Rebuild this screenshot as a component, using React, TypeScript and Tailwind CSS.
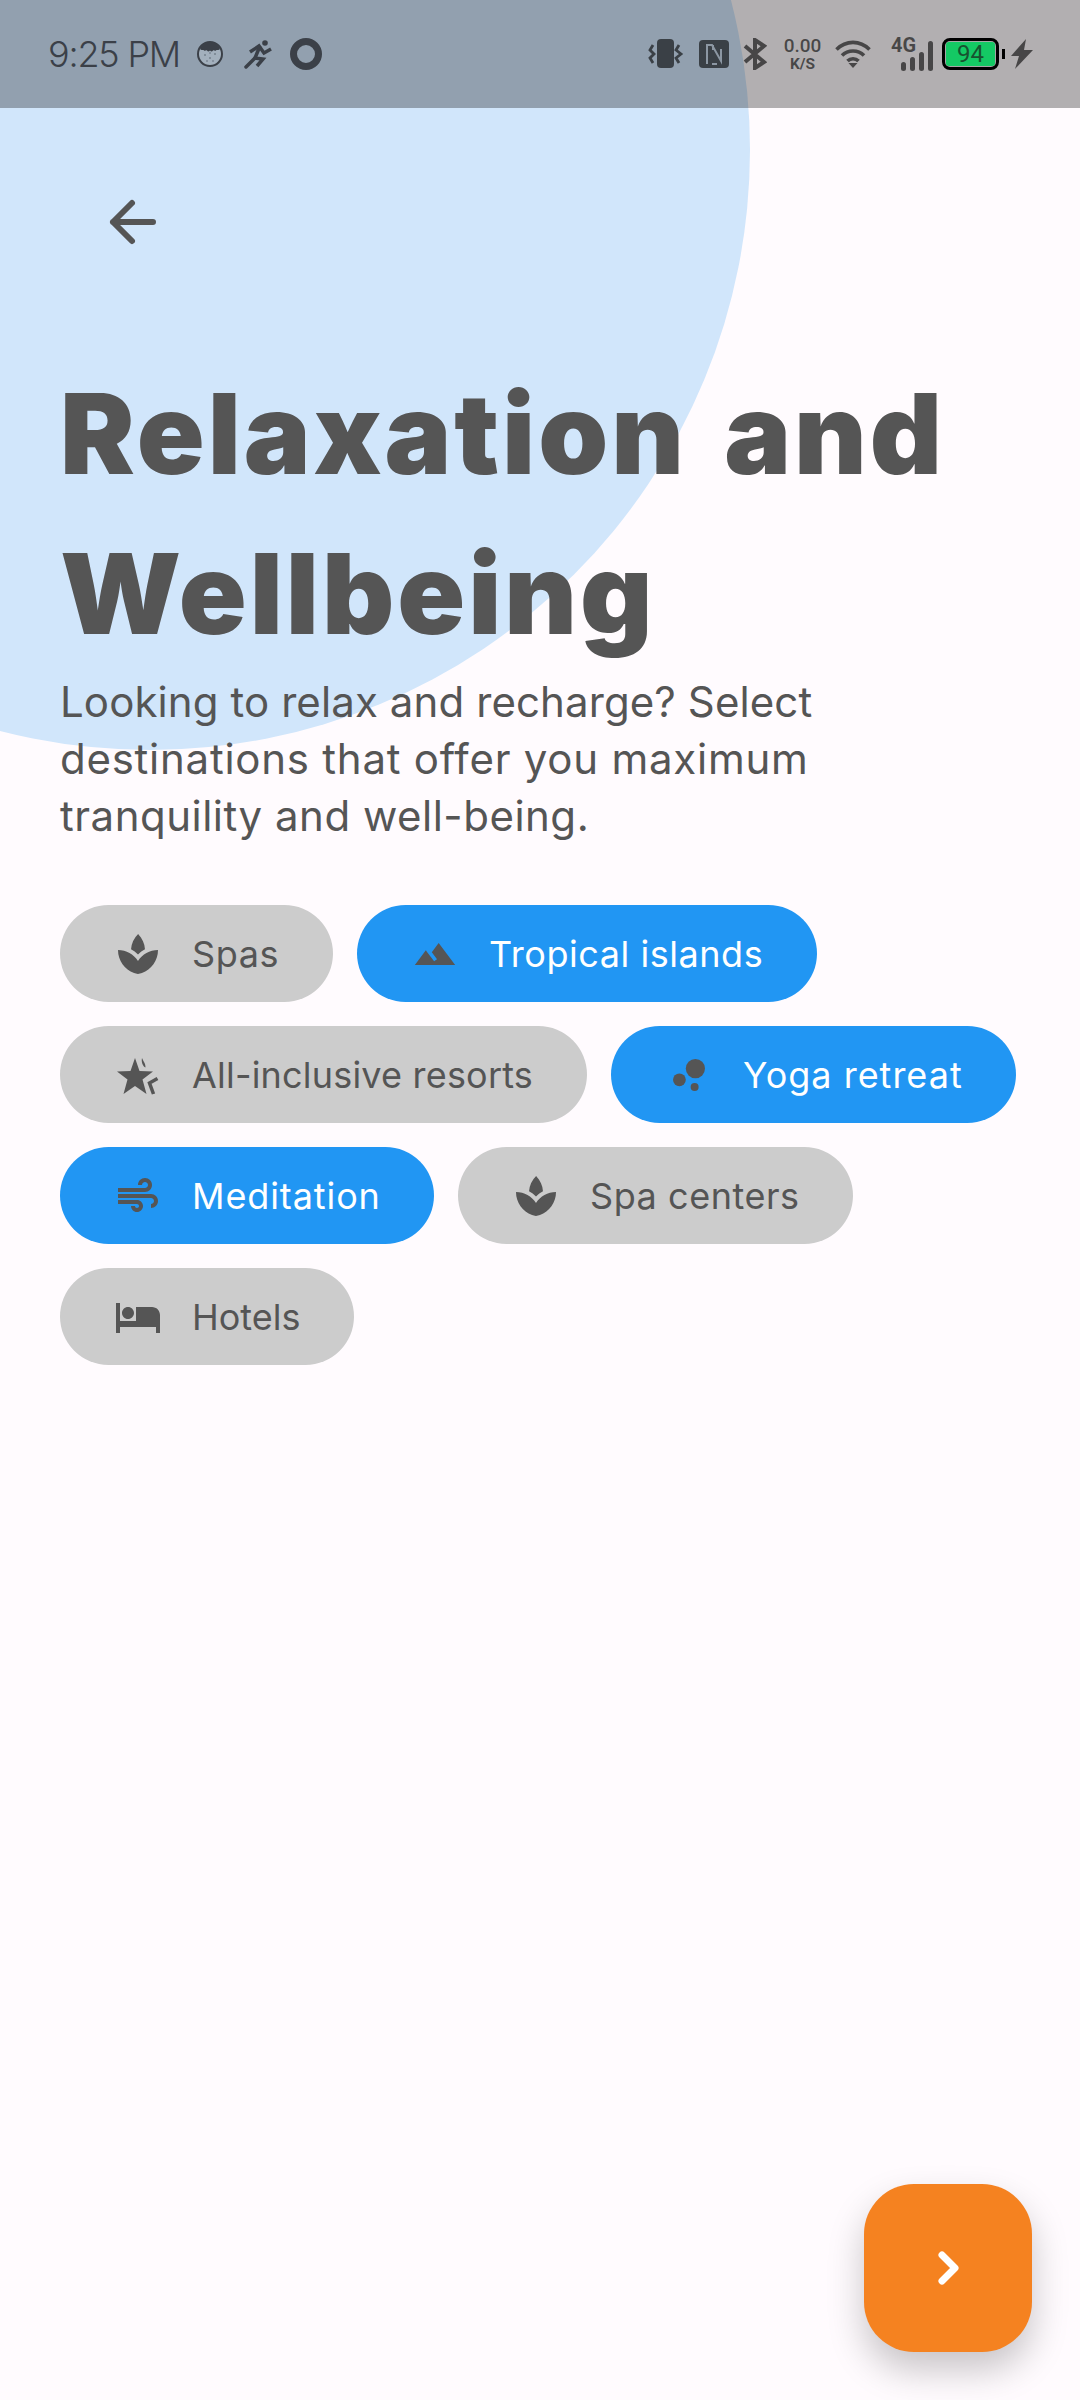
import React from "react";
import { MdSpa, MdTerrain, MdBubbleChart, MdAir, MdHotel } from "react-icons/md";

const ink = "#555555";

function StarIcon() {
  return (
    <svg viewBox="0 -4 42 42" className="h-[42px] w-[42px]">
      <path fill="#555555" d="M18 0L22.500 13L36 13.500L25.500 21.500L29.500 36L18 28L6.500 36L10.500 21.500L0 13.500L13.500 13Z" />
      <path fill="#555555" d="M25 0c1 3 3.500 5 3.500 9.500c-2.500-1-4.500-5.500-3.500-9.500z" />
      <path fill="none" stroke="#555555" strokeWidth="3.500" d="M40.500 20.500L32.500 25l4 11" />
    </svg>
  );
}

const chips = [
  { label: "Spas", icon: <MdSpa size={48} color={ink} />, on: false, w: "w-[273px]", t: "tracking-[0.6px]" },
  { label: "Tropical islands", icon: <MdTerrain size={44} color={ink} />, on: true, w: "w-[460px]", t: "tracking-[0.55px]" },
  { label: "All-inclusive resorts", icon: <StarIcon />, on: false, w: "w-[527px]", t: "tracking-[0.2px]" },
  { label: "Yoga retreat", icon: <MdBubbleChart size={48} color={ink} />, on: true, w: "w-[405px]", t: "tracking-[1px]" },
  { label: "Meditation", icon: <MdAir size={48} color={ink} />, on: true, w: "w-[374px]", t: "tracking-[0.9px]" },
  { label: "Spa centers", icon: <MdSpa size={48} color={ink} />, on: false, w: "w-[395px]", t: "tracking-[0.55px]" },
  { label: "Hotels", icon: <MdHotel size={48} color={ink} />, on: false, w: "w-[294px]", t: "tracking-[0px]" },
];

function FaceIcon() {
  return (
    <svg viewBox="0 0 28 28" className="h-[28px] w-[28px]">
      <circle cx="14" cy="14" r="12" fill="#a3b0bd" stroke="#3b4048" strokeWidth="2" />
      <path fill="#3b4048" d="M4 9C6 4 10 2 14 2s8 2 10 7c-2 2-3 0-4 1.500c-1.500 1-2-1-3 0c-1 1.500-2 1-3 0c-1 1-2 1.500-3 0c-1-1-1.500 1-3 0C7 9 6 11 4 9z" />
      <g fill="#56606c">
        <circle cx="9" cy="15" r="0.8" /><circle cx="14" cy="18" r="0.8" /><circle cx="19" cy="14" r="0.8" />
        <circle cx="11" cy="21" r="0.7" /><circle cx="17" cy="21" r="0.7" /><circle cx="14" cy="13" r="0.7" />
      </g>
    </svg>
  );
}

function RunnerIcon() {
  return (
    <svg viewBox="0 0 32 32" className="h-[32px] w-[32px]" fill="none" stroke="#3b4048" strokeWidth="3.500">
      <circle cx="23" cy="5" r="2.800" fill="#3b4048" stroke="none" />
      <path d="M8 14l9-6l5 7l7-4" />
      <path d="M18 8l-5 12l8 1l-6 7" />
      <path strokeLinecap="round" d="M13 20L4 29" />
    </svg>
  );
}

function StatusIcons() {
  return (
    <div className="flex items-center text-black/60">
      <svg viewBox="0 0 36 30" className="h-[30px] w-[36px]">
        <rect x="9" y="0" width="17" height="29" rx="4" fill="currentColor" />
        <path fill="none" stroke="currentColor" strokeWidth="2.800" d="M5 6L2 11l4 4l-4 4l3 5M31 6l-3 5l5 4l-5 4l3 5" />
      </svg>
      <svg viewBox="0 0 30 28" className="ml-[15px] h-[28px] w-[30px]">
        <rect x="0" y="0" width="30" height="28" rx="4" fill="currentColor" />
        <path fill="none" stroke="#8c97a3" strokeWidth="2" d="M8 24V5h5l9 16V9M14 5v5M18 24h-5" />
      </svg>
      <svg viewBox="0 0 24 32" className="ml-[14px] h-[32px] w-[24px]" fill="none" stroke="currentColor" strokeWidth="4">
        <path d="M2 8l19 16l-9 6V2l9 6L2 24" />
      </svg>
      <div className="ml-[16px] flex w-[39px] flex-col items-center font-['Roboto',sans-serif] font-medium leading-none">
        <span className="text-[19px] leading-[18px]">0.00</span>
        <span className="mt-[2px] text-[15.5px] font-bold leading-[15px]">K/S</span>
      </div>
      <svg viewBox="0 0 36 30" className="ml-[13px] h-[30px] w-[36px]" fill="none" stroke="currentColor" strokeWidth="3.600">
        <path d="M1.500 10.500C11 1 25 1 34.500 10.500" />
        <path d="M7 16.500C13 10.500 23 10.500 29 16.500" />
        <path d="M12.500 22C15.500 19 20.500 19 23.500 22" />
        <path fill="currentColor" stroke="none" d="M13.500 24h9L18 29z" />
      </svg>
      <div className="relative ml-[20px] h-[34px] w-[42px]">
        <span className="absolute left-0 top-[-2px] font-['Roboto',sans-serif] text-[20px] font-bold leading-[20px]">4G</span>
        <svg viewBox="0 0 42 34" className="absolute inset-0 h-[34px] w-[42px]" fill="currentColor">
          <rect x="10" y="25" width="5" height="9" rx="2.500" />
          <rect x="19" y="20" width="5" height="14" rx="2.500" />
          <rect x="28" y="15" width="5" height="19" rx="2.500" />
          <rect x="37" y="4" width="5" height="30" rx="2.500" />
        </svg>
      </div>
      <div className="ml-[9px] flex h-[32px] w-[57px] items-center justify-center rounded-[8px] border-[3px] border-black bg-[#a6a6a6] p-[1px]">
        <div className="flex h-full w-full items-center justify-center rounded-[3px] bg-[#14c964] font-['Roboto',sans-serif] text-[24px] leading-none text-[#17532f]">94</div>
      </div>
      <div className="ml-[3px] h-[10px] w-[3px] bg-black" />
      <svg viewBox="0 0 22 30" className="ml-[6px] h-[30px] w-[22px]" fill="currentColor">
        <path d="M15 0L0 17h8L4 30L22 11h-9z" />
      </svg>
    </div>
  );
}

function StatusBar() {
  return (
    <div className="relative z-10 flex h-[108px] items-center justify-between bg-black/30 pl-[48px] pr-[47px]">
      <div className="flex items-center text-[#3b4048]">
        <span className="w-[148px] whitespace-nowrap text-[36px] font-light tracking-[-1.2px]">9:25 PM</span>
        <FaceIcon />
        <span className="ml-[18px]"><RunnerIcon /></span>
        <div className="ml-[16px] h-[32px] w-[32px] rounded-full border-[7px] border-[#3b4048]" />
      </div>
      <StatusIcons />
    </div>
  );
}

export default function App() {
  return (
    <div className="relative h-[2400px] w-[1080px] overflow-hidden bg-[#fffbfe] font-['Inter','Liberation_Sans',sans-serif]">
      <div className="absolute left-[-450px] top-[-450px] h-[1200px] w-[1200px] rounded-full bg-[#d1e6fb]" />
      <StatusBar />
      <div className="relative px-[60px]">
        <div className="pt-[89px]">
          <svg viewBox="0 0 50 50" className="ml-[48px] h-[50px] w-[50px]" fill="none" stroke="#555" strokeWidth="6" strokeLinecap="round" strokeLinejoin="round">
            <path d="M45 25H5M24 6L5 25l19 19" />
          </svg>
        </div>
        <h1 className="mt-[106px] whitespace-nowrap text-[112px] font-black leading-[160px] tracking-[3px] text-[#555] [word-spacing:12px]">
          Relaxation and
          <br />
          Wellbeing
        </h1>
        <p className="text-[42px] font-normal leading-[57px] text-[#555]">
          <span className="block tracking-[0.1px]">Looking to relax and recharge? Select</span>
          <span className="block tracking-[0.75px]">destinations that offer you maximum</span>
          <span className="block tracking-[0.5px]">tranquility and well-being.</span>
        </p>
        <div className="mt-[61px] flex flex-wrap gap-[24px]">
          {chips.map((c) => (
            <div key={c.label} className={`flex h-[97px] items-center rounded-full pl-[54px] ${c.w} ${c.on ? "bg-[#2196f3] text-white" : "bg-[#cccccc] text-[#555]"}`}>
              <div className="flex w-[48px] justify-center">{c.icon}</div>
              <span className={`ml-[30px] whitespace-nowrap text-[36px] font-normal ${c.t}`}>{c.label}</span>
            </div>
          ))}
        </div>
      </div>
      <button className="absolute bottom-[48px] right-[48px] flex h-[168px] w-[168px] items-center justify-center rounded-[50px] bg-[#f58220] shadow-[0_18px_36px_rgba(0,0,0,0.22)]">
        <svg viewBox="0 0 40 40" className="h-[40px] w-[40px]" fill="none" stroke="#fff" strokeWidth="7" strokeLinecap="round" strokeLinejoin="round">
          <path d="M14 7L27 20L14 33" />
        </svg>
      </button>
    </div>
  );
}
